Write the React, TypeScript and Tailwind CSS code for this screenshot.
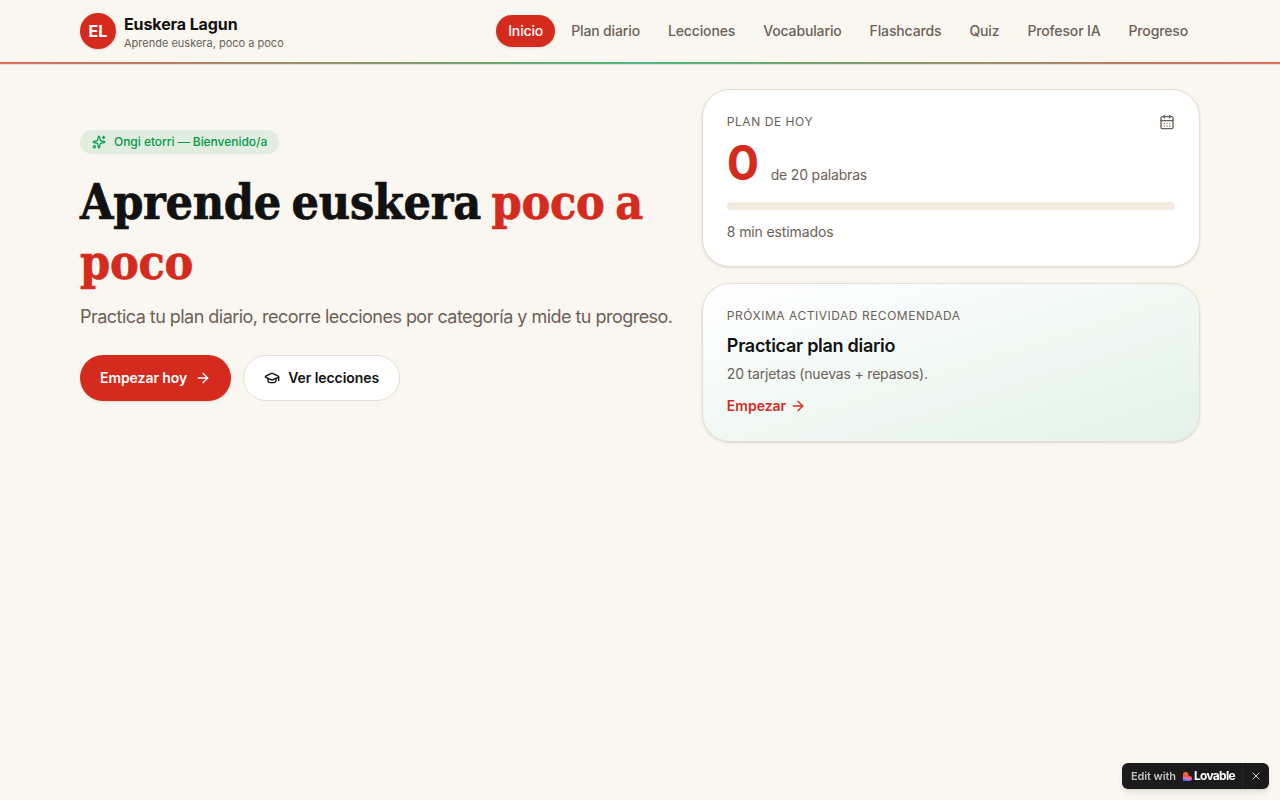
import { ArrowRight, CalendarDays, GraduationCap, Sparkles, X } from "lucide-react";

const navItems = [
  { label: "Inicio", href: "#inicio", active: true },
  { label: "Plan diario", href: "#plan" },
  { label: "Lecciones", href: "#lecciones" },
  { label: "Vocabulario", href: "#vocabulario" },
  { label: "Flashcards", href: "#flashcards" },
  { label: "Quiz", href: "#quiz" },
  { label: "Profesor IA", href: "#profesor" },
  { label: "Progreso", href: "#progreso" },
];

const plan = { done: 0, total: 20, minutes: 8 };

function Header() {
  return (
    <header className="border-b border-[#e6dfd0]">
      <div className="mx-auto flex h-[62px] w-[1120px] items-center justify-between">
        <a href="#inicio" className="flex items-center gap-2">
          <span className="flex size-9 items-center justify-center rounded-full bg-[#d52b1e] text-base font-bold text-white shadow-sm">
            EL
          </span>
          <span className="flex flex-col pt-0.5">
            <span className="text-base leading-5 font-bold tracking-[-0.1px]">Euskera Lagun</span>
            <span className="mt-0.5 text-[11px] leading-[14px] text-[#6b6157]">
              Aprende euskera, poco a poco
            </span>
          </span>
        </a>
        <nav className="flex items-center gap-1 tracking-[-0.14px]">
          {navItems.map((item) => (
            <a
              key={item.href}
              href={item.href}
              className={
                item.active
                  ? "rounded-full bg-[#d52b1e] px-3 py-1.5 text-sm font-medium text-white shadow-sm"
                  : "rounded-full px-3 py-1.5 text-sm font-medium text-[#6b6157]"
              }
            >
              {item.label}
            </a>
          ))}
        </nav>
      </div>
      <div className="h-0.5 bg-linear-to-r/srgb from-[#e06b5b] via-[#4dba7b] to-[#e06b5b]" />
    </header>
  );
}

function Hero() {
  return (
    <section>
      <span className="flex h-6 w-fit items-center gap-2 rounded-full bg-[#e1eddf] px-3 text-xs font-medium tracking-[-0.04px] text-[#009b48]">
        <Sparkles size={14} />
        Ongi etorri — Bienvenido/a
      </span>
      <h1 className="mt-[18px] font-['DejaVu_Serif_Condensed','DejaVu_Serif',serif] text-[48px] leading-[60px] font-bold tracking-[-0.3px] [word-spacing:-4px] [-webkit-text-stroke:0.7px]">
        Aprende euskera <span className="text-[#d52b1e]">poco a poco</span>
      </h1>
      <p className="mt-2.5 text-lg leading-[29px] tracking-[-0.53px] whitespace-nowrap text-[#6b6157]">
        Practica tu plan diario, recorre lecciones por categoría y mide tu progreso.
      </p>
      <div className="mt-6 flex gap-3">
        <button className="flex h-[46px] items-center gap-2 rounded-full bg-[#d52b1e] px-5 text-sm font-semibold tracking-[-0.07px] text-white shadow-sm">
          Empezar hoy
          <ArrowRight size={16} />
        </button>
        <button className="flex h-[46px] items-center gap-2 rounded-full border border-[#e6dfd0] bg-white px-5 text-sm font-semibold tracking-[-0.07px]">
          <GraduationCap size={16} />
          Ver lecciones
        </button>
      </div>
    </section>
  );
}

function PlanCard() {
  return (
    <section className="rounded-[28px] border border-[#e6dfd0] bg-white p-6 shadow-sm">
      <div className="flex h-4 items-center justify-between text-[#6b6157]">
        <h2 className="text-xs tracking-[0.55px] uppercase">Plan de hoy</h2>
        <CalendarDays size={16} />
      </div>
      <div className="mt-2 flex h-12 items-end gap-3">
        <span className="text-5xl leading-[46px] font-bold tracking-[-0.5px] text-[#d52b1e]">
          {plan.done}
        </span>
        <span className="pb-px text-sm tracking-[-0.18px] text-[#6b6157]">
          de {plan.total} palabras
        </span>
      </div>
      <div className="mt-4 h-2 overflow-hidden rounded-full bg-[#f2ebdf]">
        <div
          className="h-full bg-[#d52b1e]"
          style={{ width: `${(plan.done / plan.total) * 100}%` }}
        />
      </div>
      <p className="mt-3 text-sm tracking-[-0.12px] text-[#6b6157]">{plan.minutes} min estimados</p>
    </section>
  );
}

function NextActivityCard() {
  return (
    <section className="h-[159px] rounded-[28px] border border-[#e6dfd0] bg-linear-to-br/srgb from-white to-[#e3f2ea] p-6 shadow-sm">
      <h2 className="text-xs tracking-[0.52px] text-[#6b6157] uppercase">
        Próxima actividad recomendada
      </h2>
      <h3 className="mt-2 text-lg font-semibold tracking-[-0.28px]">Practicar plan diario</h3>
      <p className="mt-1 text-sm tracking-[-0.18px] text-[#6b6157]">
        20 tarjetas (nuevas + repasos).
      </p>
      <a
        href="#plan"
        className="mt-3 flex w-fit items-center gap-1 text-sm font-semibold text-[#d52b1e]"
      >
        Empezar
        <ArrowRight size={16} />
      </a>
    </section>
  );
}

function LovableMark() {
  return (
    <svg viewBox="0 0 18 18" className="size-[9px]">
      <defs>
        <linearGradient id="lovable" x1="0.6" y1="0" x2="0.4" y2="1">
          <stop offset="0.2" stopColor="#ff6a1a" />
          <stop offset="0.5" stopColor="#fe5045" />
          <stop offset="0.7" stopColor="#f66bc5" />
          <stop offset="0.95" stopColor="#4b73ff" />
        </linearGradient>
      </defs>
      <path
        d="M0 5.4a5.4 5.4 0 0 1 10.8 0v2h1.8a5.3 5.3 0 0 1 0 10.6H0z"
        fill="url(#lovable)"
      />
    </svg>
  );
}

function EditBadge() {
  return (
    <aside className="fixed right-[11px] bottom-[11px] flex h-[26px] w-[147px] items-center rounded-md bg-[#1b1b1b] shadow-md">
      <a href="#lovable" className="flex h-full w-[120px] items-center pl-[9px] text-[#c5c1ba]">
        <span className="text-[11px] font-semibold tracking-[-0.1px]">Edit with</span>
        <span className="ml-[7px] flex items-center gap-0.5">
          <LovableMark />
          <span className="text-xs font-bold tracking-[-0.7px] text-white">Lovable</span>
        </span>
      </a>
      <button
        aria-label="Cerrar"
        className="flex h-full flex-1 items-center justify-center border-l border-[#242424] pr-px text-[#d8d5cf]"
      >
        <X size={12} />
      </button>
    </aside>
  );
}

export default function App() {
  return (
    <div className="min-h-screen bg-[#faf7f0] font-[Inter,sans-serif] text-[#111111]">
      <Header />
      <main className="mx-auto grid w-[1120px] grid-cols-[1.2fr_1fr] items-center gap-6 py-6">
        <Hero />
        <div className="flex flex-col gap-4">
          <PlanCard />
          <NextActivityCard />
        </div>
      </main>
      <EditBadge />
    </div>
  );
}
